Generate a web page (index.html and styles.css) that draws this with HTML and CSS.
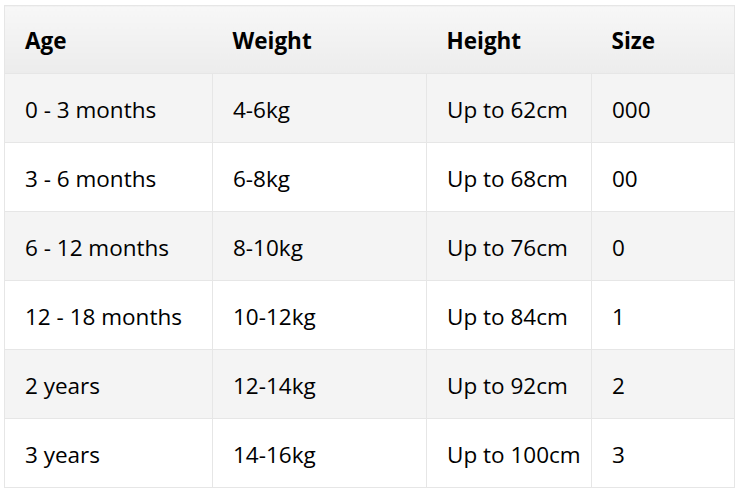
FILE: index.html
```html
<!DOCTYPE html>
<html>
<head>
<meta charset="utf-8">
<link rel="stylesheet" href="styles.css">
</head>
<body>
<table class="size-table">
  <colgroup>
    <col class="c1"><col class="c2"><col class="c3"><col class="c4">
  </colgroup>
  <thead>
    <tr><th>Age</th><th>Weight</th><th>Height</th><th>Size</th></tr>
  </thead>
  <tbody>
    <tr><td>0 - 3 months</td><td>4-6kg</td><td>Up to 62cm</td><td>000</td></tr>
    <tr><td>3 - 6 months</td><td>6-8kg</td><td>Up to 68cm</td><td>00</td></tr>
    <tr><td>6 - 12 months</td><td>8-10kg</td><td>Up to 76cm</td><td>0</td></tr>
    <tr><td>12 - 18 months</td><td>10-12kg</td><td>Up to 84cm</td><td>1</td></tr>
    <tr><td>2 years</td><td>12-14kg</td><td>Up to 92cm</td><td>2</td></tr>
    <tr><td>3 years</td><td>14-16kg</td><td>Up to 100cm</td><td>3</td></tr>
  </tbody>
</table>
</body>
</html>
```
FILE: styles.css
```css
html, body {
  margin: 0;
  padding: 0;
  background: #ffffff;
}
body {
  padding: 5px 0 0 4px;
  font-family: "Open Sans", "Noto Sans", sans-serif;
  color: #000;
}
.size-table {
  border-collapse: collapse;
  table-layout: fixed;
  width: 730px;
  font-size: 22.5px;
}
.c1 { width: 208px; }
.c2 { width: 214px; }
.c3 { width: 165px; }
.c4 { width: 143px; }
.size-table th,
.size-table td {
  text-align: left;
  padding: 2px 20px 0;
  border: 1px solid #e6e6e6;
  white-space: nowrap;
}
.size-table th {
  height: 65px;
  font-weight: 700;
  background: linear-gradient(#f7f7f7, #ececec);
  border-left: none;
  border-right: none;
}
.size-table th:first-child { border-left: 1px solid #e6e6e6; }
.size-table th:last-child { border-right: 1px solid #e6e6e6; }
.size-table td {
  height: 66px;
  font-weight: 400;
}
.size-table tbody tr:nth-child(odd) td { background: #f4f4f4; }
.size-table tbody tr:nth-child(even) td { background: #ffffff; }
```
